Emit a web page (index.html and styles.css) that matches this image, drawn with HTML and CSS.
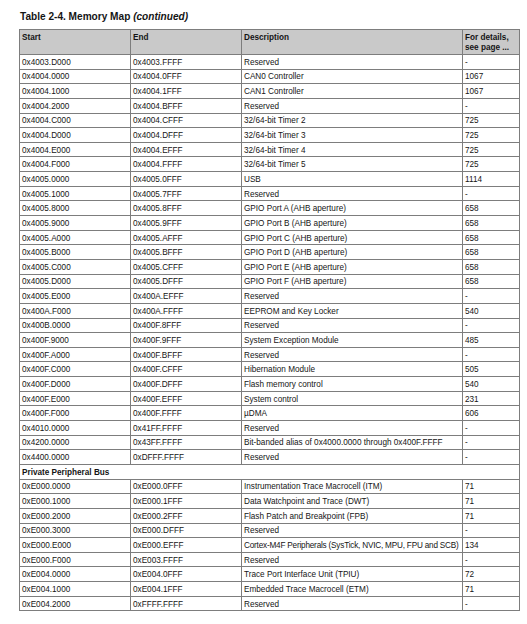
FILE: index.html
```html
<!DOCTYPE html>
<html>
<head>
<meta charset="utf-8">
<link rel="stylesheet" href="styles.css">
</head>
<body>
<div class="page">
  <h1 class="title">Table 2-4. Memory Map <em>(continued)</em></h1>
  <table class="map">
    <colgroup>
      <col class="c-start"><col class="c-end"><col class="c-desc"><col class="c-page">
    </colgroup>
    <thead>
      <tr><th>Start</th><th>End</th><th>Description</th><th>For details,<br>see page ...</th></tr>
    </thead>
    <tbody>
      <tr><td>0x4003.D000</td><td>0x4003.FFFF</td><td>Reserved</td><td>-</td></tr>
      <tr><td>0x4004.0000</td><td>0x4004.0FFF</td><td>CAN0 Controller</td><td>1067</td></tr>
      <tr><td>0x4004.1000</td><td>0x4004.1FFF</td><td>CAN1 Controller</td><td>1067</td></tr>
      <tr><td>0x4004.2000</td><td>0x4004.BFFF</td><td>Reserved</td><td>-</td></tr>
      <tr><td>0x4004.C000</td><td>0x4004.CFFF</td><td>32/64-bit Timer 2</td><td>725</td></tr>
      <tr><td>0x4004.D000</td><td>0x4004.DFFF</td><td>32/64-bit Timer 3</td><td>725</td></tr>
      <tr><td>0x4004.E000</td><td>0x4004.EFFF</td><td>32/64-bit Timer 4</td><td>725</td></tr>
      <tr><td>0x4004.F000</td><td>0x4004.FFFF</td><td>32/64-bit Timer 5</td><td>725</td></tr>
      <tr><td>0x4005.0000</td><td>0x4005.0FFF</td><td>USB</td><td>1114</td></tr>
      <tr><td>0x4005.1000</td><td>0x4005.7FFF</td><td>Reserved</td><td>-</td></tr>
      <tr><td>0x4005.8000</td><td>0x4005.8FFF</td><td>GPIO Port A (AHB aperture)</td><td>658</td></tr>
      <tr><td>0x4005.9000</td><td>0x4005.9FFF</td><td>GPIO Port B (AHB aperture)</td><td>658</td></tr>
      <tr><td>0x4005.A000</td><td>0x4005.AFFF</td><td>GPIO Port C (AHB aperture)</td><td>658</td></tr>
      <tr><td>0x4005.B000</td><td>0x4005.BFFF</td><td>GPIO Port D (AHB aperture)</td><td>658</td></tr>
      <tr><td>0x4005.C000</td><td>0x4005.CFFF</td><td>GPIO Port E (AHB aperture)</td><td>658</td></tr>
      <tr><td>0x4005.D000</td><td>0x4005.DFFF</td><td>GPIO Port F (AHB aperture)</td><td>658</td></tr>
      <tr><td>0x4005.E000</td><td>0x400A.EFFF</td><td>Reserved</td><td>-</td></tr>
      <tr><td>0x400A.F000</td><td>0x400A.FFFF</td><td>EEPROM and Key Locker</td><td>540</td></tr>
      <tr><td>0x400B.0000</td><td>0x400F.8FFF</td><td>Reserved</td><td>-</td></tr>
      <tr><td>0x400F.9000</td><td>0x400F.9FFF</td><td>System Exception Module</td><td>485</td></tr>
      <tr><td>0x400F.A000</td><td>0x400F.BFFF</td><td>Reserved</td><td>-</td></tr>
      <tr><td>0x400F.C000</td><td>0x400F.CFFF</td><td>Hibernation Module</td><td>505</td></tr>
      <tr><td>0x400F.D000</td><td>0x400F.DFFF</td><td>Flash memory control</td><td>540</td></tr>
      <tr><td>0x400F.E000</td><td>0x400F.EFFF</td><td>System control</td><td>231</td></tr>
      <tr><td>0x400F.F000</td><td>0x400F.FFFF</td><td>µDMA</td><td>606</td></tr>
      <tr><td>0x4010.0000</td><td>0x41FF.FFFF</td><td>Reserved</td><td>-</td></tr>
      <tr><td>0x4200.0000</td><td>0x43FF.FFFF</td><td>Bit-banded alias of 0x4000.0000 through 0x400F.FFFF</td><td>-</td></tr>
      <tr><td>0x4400.0000</td><td>0xDFFF.FFFF</td><td>Reserved</td><td>-</td></tr>
      <tr class="section"><td colspan="4">Private Peripheral Bus</td></tr>
      <tr><td>0xE000.0000</td><td>0xE000.0FFF</td><td>Instrumentation Trace Macrocell (ITM)</td><td>71</td></tr>
      <tr><td>0xE000.1000</td><td>0xE000.1FFF</td><td>Data Watchpoint and Trace (DWT)</td><td>71</td></tr>
      <tr><td>0xE000.2000</td><td>0xE000.2FFF</td><td>Flash Patch and Breakpoint (FPB)</td><td>71</td></tr>
      <tr><td>0xE000.3000</td><td>0xE000.DFFF</td><td>Reserved</td><td>-</td></tr>
      <tr><td>0xE000.E000</td><td>0xE000.EFFF</td><td class="tight">Cortex-M4F Peripherals (SysTick, NVIC, MPU, FPU and SCB)</td><td>134</td></tr>
      <tr><td>0xE000.F000</td><td>0xE003.FFFF</td><td>Reserved</td><td>-</td></tr>
      <tr><td>0xE004.0000</td><td>0xE004.0FFF</td><td>Trace Port Interface Unit (TPIU)</td><td>72</td></tr>
      <tr><td>0xE004.1000</td><td>0xE004.1FFF</td><td>Embedded Trace Macrocell (ETM)</td><td>71</td></tr>
      <tr><td>0xE004.2000</td><td>0xFFFF.FFFF</td><td>Reserved</td><td>-</td></tr>
    </tbody>
  </table>
</div>
</body>
</html>
```

FILE: styles.css
```css
html, body {
  margin: 0;
  padding: 0;
  background: #ffffff;
}

.page {
  padding: 11px 9px 0 19px;
  font-family: "Liberation Sans", Arial, sans-serif;
  color: #151515;
}

.title {
  margin: 0 0 7px 1px;
  font-size: 10.1px;
  line-height: 11px;
  font-weight: bold;
}

.title em {
  font-style: italic;
}

.map {
  border-collapse: collapse;
  table-layout: fixed;
  width: 500px;
  font-size: 8.2px;
}

.c-start { width: 111px; }
.c-end { width: 111px; }
.c-desc { width: 221px; }
.c-page { width: 57px; }

.map th,
.map td {
  border: 1px solid #7d7d7d;
  padding: 0 2px;
  text-align: left;
  white-space: nowrap;
  overflow: hidden;
}

.map th {
  background: #c9c9c9;
  font-weight: bold;
  vertical-align: top;
  height: 25px;
  padding-top: 3px;
  line-height: 10px;
  box-sizing: border-box;
}

.map td {
  height: 14.65px;
  box-sizing: border-box;
  line-height: 10px;
  padding-top: 2px;
  vertical-align: middle;
}

.map td.tight {
  letter-spacing: -0.2px;
  padding-right: 0;
}

.map .section td {
  font-weight: bold;
}
```
